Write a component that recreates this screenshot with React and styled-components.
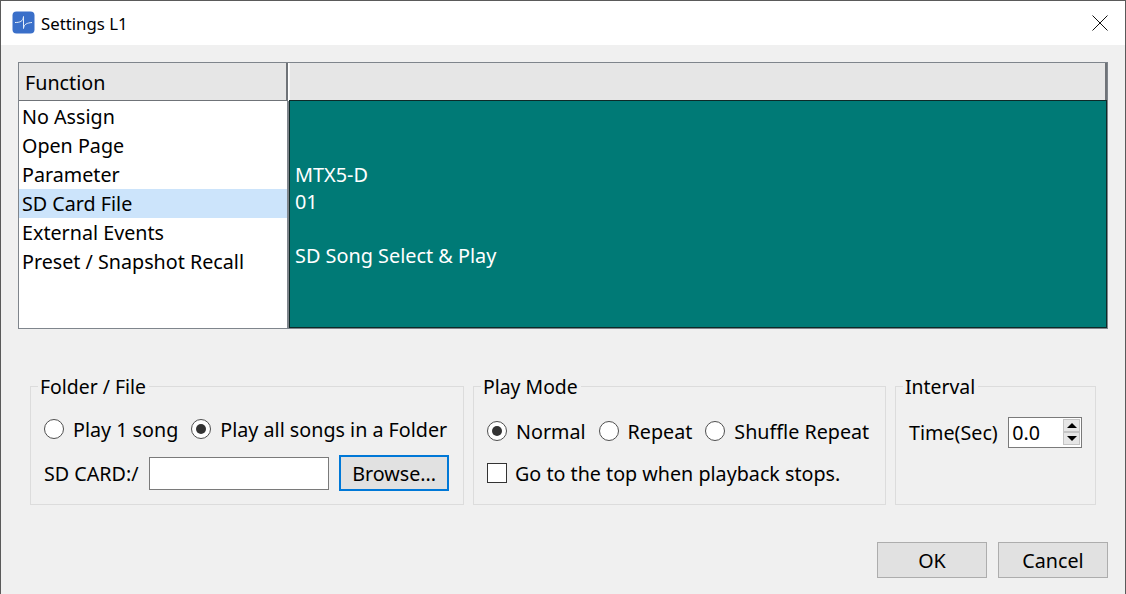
import React from "react";
import styled, { createGlobalStyle } from "styled-components";

const GlobalStyle = createGlobalStyle`
  html, body {
    margin: 0;
    padding: 0;
    background: #f0f0f0;
  }
  * {
    box-sizing: border-box;
  }
`;

const Dialog = styled.div`
  width: 1126px;
  height: 594px;
  overflow: hidden;
  background: #f0f0f0;
  border-top: 1px solid #5a5a5a;
  border-left: 1px solid #5a5a5a;
  border-right: 1px solid #5a5a5a;
  font-family: "Noto Sans", sans-serif;
  font-size: 19.72px;
  line-height: 27px;
  color: #000;
  display: flex;
  flex-direction: column;
`;

const TitleBar = styled.div`
  height: 44px;
  flex: none;
  background: #fff;
  display: flex;
  align-items: center;
  padding: 0 13px 1px 11px;
`;

const TitleText = styled.span`
  margin-left: 6px;
  padding-top: 2px;
  font-size: 16.8px;
  flex: 1;
`;

const CloseButton = styled.svg`
  width: 16px;
  height: 16px;
  margin-right: 4px;
  display: block;
`;

const Body = styled.div`
  flex: 1;
  display: flex;
  flex-direction: column;
  padding: 17px 17px 0 17px;
`;

const Table = styled.div`
  width: 1090px;
  height: 267px;
  flex: none;
  border: 1px solid #7f858c;
  display: grid;
  grid-template-columns: 270px 818px;
  grid-template-rows: 38px 227px;
  background: #fff;
`;

const FunctionHeader = styled.div`
  background: #e6e6e6;
  margin-right: 1px;
  padding: 1px 0 0 6px;
  display: flex;
  align-items: center;
  border-right: 2px solid #6f7378;
  border-bottom: 1px solid #6f7378;
`;

const BlankHeader = styled.div`
  height: 37px;
  background: #e6e6e6;
  border-left: 1px solid #f7f7f7;
  border-right: 2px solid #6f7378;
`;

const FunctionList = styled.div`
  background: #fff;
  padding-top: 1px;
  border-right: 2px solid #7f858c;
`;

const FunctionItem = styled.div`
  height: 29px;
  line-height: 29px;
  padding-left: 3px;
  background: ${(p) => (p.$selected ? "#cce4fb" : "transparent")};
`;

const Detail = styled.div`
  background: #007a76;
  color: #fff;
  border: 1px solid #0d2a28;
  margin-top: -1px;
  padding: 60px 0 0 5px;
  font-size: 19.85px;
`;

const DetailLine = styled.div`
  height: 27px;
  line-height: 27px;
`;

const Groups = styled.div`
  display: flex;
  margin: 43px 0 0 12px;
  gap: 9px;
`;

const Group = styled.fieldset`
  margin: 0;
  width: ${(p) => p.$width}px;
  height: 133px;
  border: 1px solid #dcdcdc;
  padding: 0 0 0 ${(p) => p.$pad}px;
  min-width: 0;
`;

const Legend = styled.legend`
  padding: 1px 3px 1px 2px;
  margin-left: ${(p) => p.$offset}px;
  font-size: 19.4px;
  line-height: 27px;
`;

const Row = styled.div`
  display: flex;
  align-items: center;
  height: 30px;
  margin-top: ${(p) => p.$top || 0}px;
`;

const RadioLabel = styled.label`
  display: flex;
  align-items: center;
  margin-right: ${(p) => p.$gap}px;
  white-space: nowrap;
`;

const RadioMark = styled.span`
  width: 20px;
  height: 20px;
  flex: none;
  border-radius: 50%;
  border: 1px solid #4f4f4f;
  background: #fff;
  margin-right: 9px;
  display: flex;
  align-items: center;
  justify-content: center;
  &::after {
    content: "";
    display: ${(p) => (p.$checked ? "block" : "none")};
    width: 10px;
    height: 10px;
    border-radius: 50%;
    background: #333;
  }
`;

const CheckMark = styled.span`
  width: 20px;
  height: 20px;
  flex: none;
  border: 1px solid #333;
  background: #fff;
  margin-right: 8px;
`;

const PathInput = styled.div`
  width: 180px;
  height: 33px;
  margin: 0 10px 0 10.5px;
  background: #fff;
  border: 1px solid #7a7a7a;
`;

const Button = styled.button`
  width: ${(p) => p.$width}px;
  height: 36px;
  padding: 0;
  font: inherit;
  color: #000;
  background: #e1e1e1;
  border: ${(p) => (p.$focused ? "2px solid #0078d7" : "1px solid #adadad")};
`;

const TimeLabel = styled.span`
  margin-right: 10.5px;
`;

const Spinner = styled.div`
  width: 74px;
  height: 31px;
  background: #fff;
  border: 1px solid #7a7a7a;
  display: flex;
  align-items: center;
  justify-content: space-between;
  padding: 1px 1px 1px 3px;
`;

const SpinButtons = styled.div`
  width: 17px;
  height: 26px;
  display: flex;
  flex-direction: column;
`;

const SpinButton = styled.div`
  flex: 1;
  background: #e6e6e6;
  border: 1px solid #c4c4c4;
  display: flex;
  align-items: center;
  justify-content: center;
  &::after {
    content: "";
    border-left: 5px solid transparent;
    border-right: 5px solid transparent;
    border-${(p) => (p.$up ? "bottom" : "top")}: 5px solid #000;
  }
`;

const Actions = styled.div`
  display: flex;
  justify-content: flex-end;
  gap: 11px;
  margin-top: 37px;
`;

const functions = [
  "No Assign",
  "Open Page",
  "Parameter",
  "SD Card File",
  "External Events",
  "Preset / Snapshot Recall",
];

const Radio = ({ checked, gap, children }) => (
  <RadioLabel $gap={gap}>
    <RadioMark $checked={checked} />
    {children}
  </RadioLabel>
);

const AppIcon = () => (
  <svg width="23" height="23" viewBox="0 0 23 23">
    <rect x="0.5" y="0.5" width="22" height="22" rx="4" fill="#3a6fc9" />
    <path
      d="M3 11.5C8 11.5 11 10.5 11.5 5.5V17.5C12 13 15 12 20 11.5"
      fill="none"
      stroke="#e6eef9"
      strokeWidth="1"
    />
  </svg>
);

export default function App() {
  return (
    <>
      <GlobalStyle />
      <Dialog>
        <TitleBar>
          <AppIcon />
          <TitleText>Settings L1</TitleText>
          <CloseButton viewBox="0 0 16 16">
            <path d="M0.5 0.5L15.5 15.5M15.5 0.5L0.5 15.5" stroke="#111" strokeWidth="1" />
          </CloseButton>
        </TitleBar>
        <Body>
          <Table>
            <FunctionHeader>Function</FunctionHeader>
            <BlankHeader />
            <FunctionList>
              {functions.map((name) => (
                <FunctionItem key={name} $selected={name === "SD Card File"}>
                  {name}
                </FunctionItem>
              ))}
            </FunctionList>
            <Detail>
              <DetailLine>MTX5-D</DetailLine>
              <DetailLine>01</DetailLine>
              <DetailLine />
              <DetailLine>SD Song Select &amp; Play</DetailLine>
            </Detail>
          </Table>
          <Groups>
            <Group $width={434} $pad={13}>
              <Legend $offset={-6}>Folder / File</Legend>
              <Row $top={13}>
                <Radio gap={13}>Play 1 song</Radio>
                <Radio checked gap={0}>Play all songs in a Folder</Radio>
              </Row>
              <Row $top={14}>
                SD CARD:/
                <PathInput />
                <Button $width={110} $focused>Browse...</Button>
              </Row>
            </Group>
            <Group $width={413} $pad={13}>
              <Legend $offset={-6}>Play Mode</Legend>
              <Row $top={15}>
                <Radio checked gap={13}>Normal</Radio>
                <Radio gap={13}>Repeat</Radio>
                <Radio gap={0}>Shuffle Repeat</Radio>
              </Row>
              <Row $top={12}>
                <CheckMark />
                Go to the top when playback stops.
              </Row>
            </Group>
            <Group $width={201} $pad={13}>
              <Legend $offset={-6}>Interval</Legend>
              <Row $top={16}>
                <TimeLabel>Time(Sec)</TimeLabel>
                <Spinner>
                  0.0
                  <SpinButtons>
                    <SpinButton $up />
                    <SpinButton />
                  </SpinButtons>
                </Spinner>
              </Row>
            </Group>
          </Groups>
          <Actions>
            <Button $width={110}>OK</Button>
            <Button $width={110}>Cancel</Button>
          </Actions>
        </Body>
      </Dialog>
    </>
  );
}
